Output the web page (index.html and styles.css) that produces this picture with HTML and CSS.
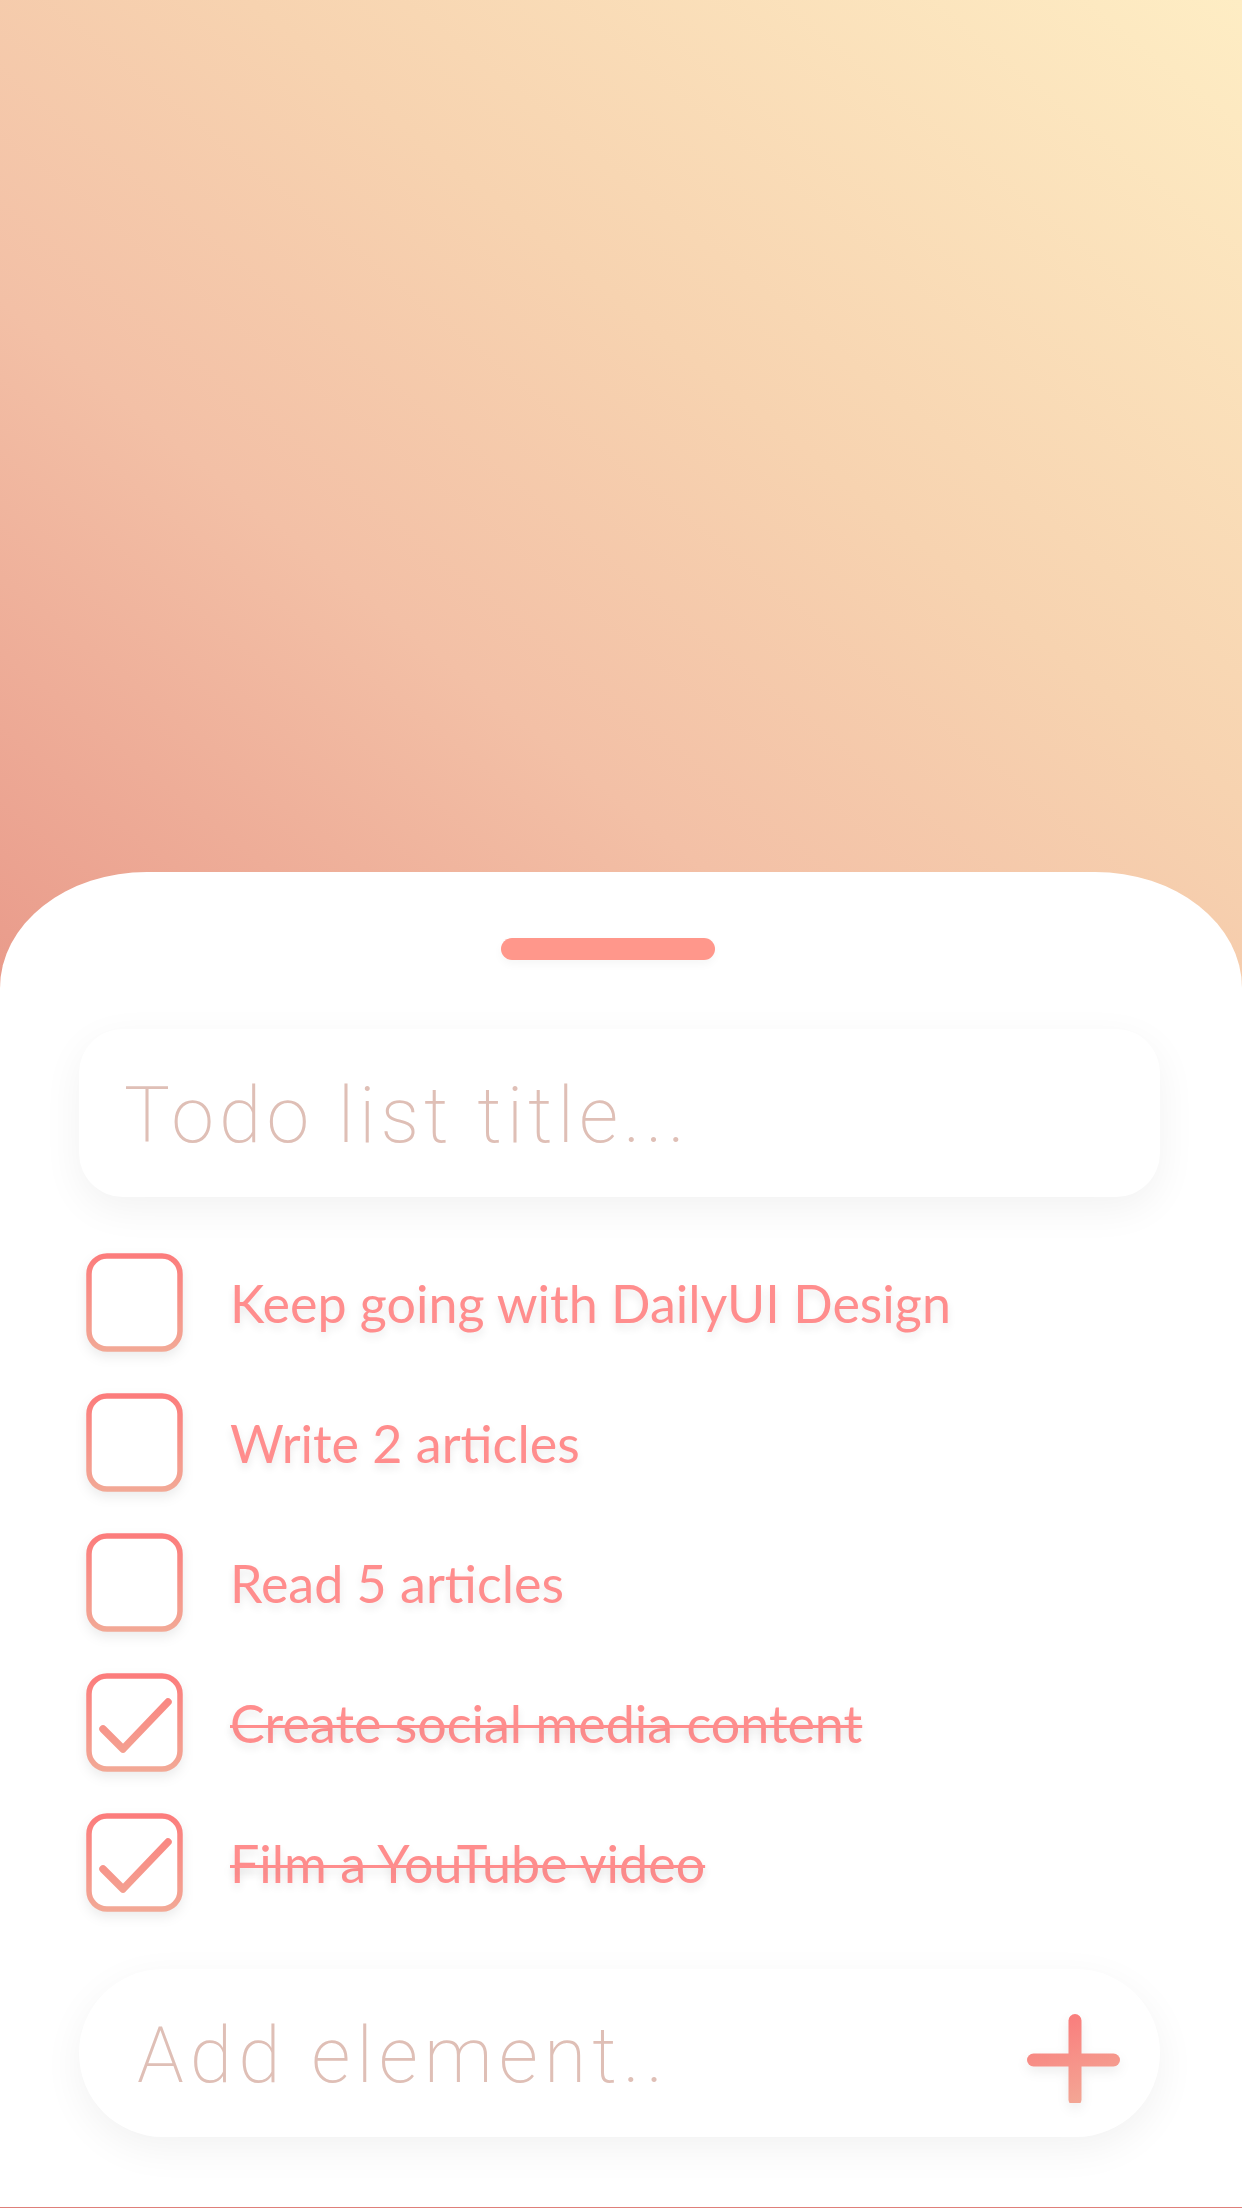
FILE: index.html
```html
<!DOCTYPE html>
<html lang="en">
<head>
<meta charset="utf-8">
<title>Todo list</title>
<link rel="stylesheet" href="styles.css">
</head>
<body>
<svg class="defs" width="0" height="0" aria-hidden="true">
  <defs>
    <linearGradient id="boxGrad" gradientUnits="userSpaceOnUse" x1="0" y1="0" x2="0" y2="99">
      <stop offset="0" stop-color="#fc7b7b"/>
      <stop offset="1" stop-color="#f2a996"/>
    </linearGradient>
    <linearGradient id="plusGrad" gradientUnits="userSpaceOnUse" x1="40" y1="10" x2="70" y2="100">
      <stop offset="0" stop-color="#fa7b7b"/>
      <stop offset="1" stop-color="#f3a896"/>
    </linearGradient>
  </defs>
</svg>
<div class="page">
  <div class="sheet">
    <div class="handle"></div>
    <div class="field title-field">
      <span class="placeholder">Todo list title...</span>
    </div>
    <ul class="list">
      <li class="item">
        <svg class="box" viewBox="0 0 97 99" width="97" height="99"><rect x="3" y="3" width="91" height="93" rx="18" ry="18"/></svg>
        <span class="label">Keep going with DailyUI Design</span>
      </li>
      <li class="item">
        <svg class="box" viewBox="0 0 97 99" width="97" height="99"><rect x="3" y="3" width="91" height="93" rx="18" ry="18"/></svg>
        <span class="label">Write 2 articles</span>
      </li>
      <li class="item">
        <svg class="box" viewBox="0 0 97 99" width="97" height="99"><rect x="3" y="3" width="91" height="93" rx="18" ry="18"/></svg>
        <span class="label">Read 5 articles</span>
      </li>
      <li class="item done">
        <svg class="box" viewBox="0 0 97 99" width="97" height="99"><rect x="3" y="3" width="91" height="93" rx="18" ry="18"/><path class="check" d="M17 56 L37 76 L82 29"/></svg>
        <span class="label">Create social media content</span>
      </li>
      <li class="item done">
        <svg class="box" viewBox="0 0 97 99" width="97" height="99"><rect x="3" y="3" width="91" height="93" rx="18" ry="18"/><path class="check" d="M17 56 L37 76 L82 29"/></svg>
        <span class="label">Film a YouTube video</span>
      </li>
    </ul>
    <div class="field add-field">
      <span class="placeholder">Add element..</span>
      <svg class="plus" viewBox="0 0 100 100" width="100" height="100">
        <line x1="13.5" y1="57" x2="93.5" y2="57"/>
        <line x1="55" y1="17.5" x2="55" y2="96.5"/>
      </svg>
    </div>
  </div>
</div>
</body>
</html>
```

FILE: styles.css
```css
html, body {
  margin: 0;
  padding: 0;
}

body {
  width: 1242px;
  height: 2208px;
  overflow: hidden;
  font-family: "Lato", "Liberation Sans", sans-serif;
}

.defs {
  display: block;
  width: 0;
  height: 0;
  overflow: hidden;
}

.page {
  width: 1242px;
  height: 2208px;
  background:
    linear-gradient(to top right, #e99a8a 0%, #f3c0a6 35%, #f7d3b0 60%, #feedc4 100%) top left / 1242px 1000px no-repeat,
    #df7f79;
  overflow: hidden;
}

.sheet {
  margin-top: 872px;
  height: 1335px;
  background: #ffffff;
  border-radius: 147px 147px 0 0 / 116px 116px 0 0;
  display: flex;
  flex-direction: column;
  overflow: hidden;
}

.handle {
  width: 214px;
  height: 22px;
  margin: 66px 0 0 501px;
  border-radius: 11px;
  background: #ff978b;
  box-shadow: 0 4px 10px rgba(0, 0, 0, 0.04);
}

.field {
  margin: 0 82px 0 79px;
  height: 168px;
  background: #ffffff;
  box-shadow: 0 12px 40px rgba(0, 0, 0, 0.055);
  display: flex;
  align-items: center;
  box-sizing: border-box;
}

.title-field {
  margin-top: 69px;
  border-radius: 44px;
  padding-left: 45px;
}

.placeholder {
  font-family: "Roboto", "Liberation Sans", sans-serif;
  font-weight: 200;
  color: #dfbfb6;
  font-size: 77px;
  letter-spacing: 5px;
  line-height: 1;
}

.title-field .placeholder {
  margin-top: 6px;
}

.list {
  list-style: none;
  margin: 56px 0 0 86px;
  padding: 0;
  display: flex;
  flex-direction: column;
  gap: 41px;
}

.item {
  display: flex;
  align-items: center;
  height: 99px;
}

.box {
  flex: none;
  display: block;
  filter: drop-shadow(0 5px 6px rgba(0, 0, 0, 0.08));
}

.box rect {
  fill: #ffffff;
  stroke: url(#boxGrad);
  stroke-width: 5.5;
}

.box .check {
  fill: none;
  stroke: url(#boxGrad);
  stroke-width: 7.5;
  stroke-linecap: round;
  stroke-linejoin: round;
}

.label {
  margin-left: 47px;
  font-size: 52px;
  letter-spacing: 0;
  color: #ff8d8d;
  text-shadow: 0 5px 8px rgba(0, 0, 0, 0.09);
  line-height: 1;
  white-space: nowrap;
}

.done .label {
  text-decoration: line-through;
  text-decoration-thickness: 3px;
}

.add-field {
  margin-top: 57px;
  border-radius: 84px;
  padding: 0 40px 0 58px;
  justify-content: space-between;
}

.add-field .placeholder {
  margin-top: 6px;
  letter-spacing: 6px;
}

.plus {
  display: block;
  flex: none;
  filter: drop-shadow(0 5px 6px rgba(0, 0, 0, 0.07));
}

.plus line {
  stroke: url(#plusGrad);
  stroke-width: 13;
  stroke-linecap: round;
}
```
